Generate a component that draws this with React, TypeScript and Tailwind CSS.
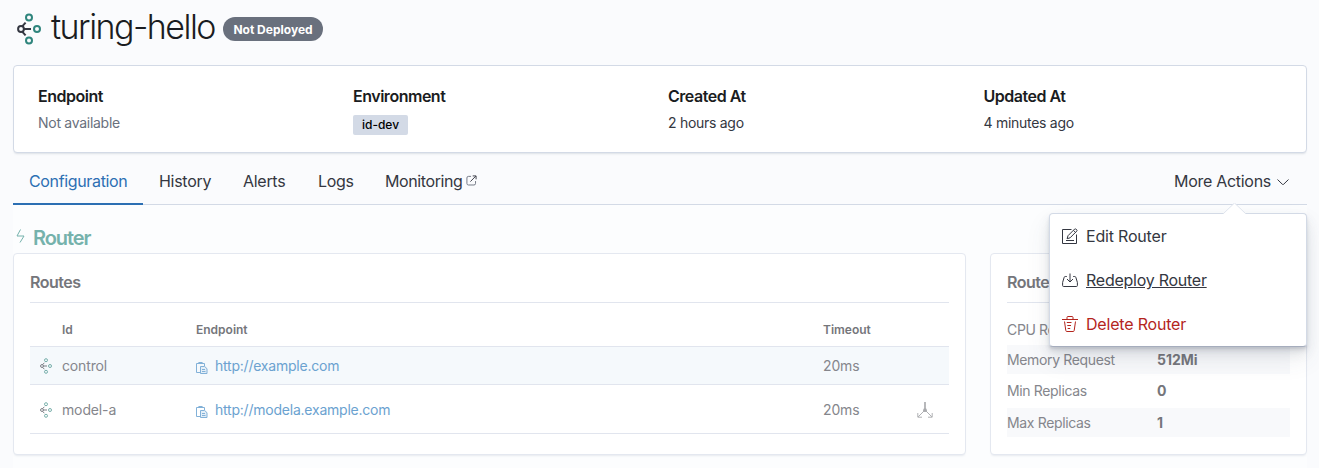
import React from "react";

function NodesIcon({ className, thin }: { className: string; thin?: boolean }) {
  return (
    <svg className={className} viewBox="0 0 24 32" fill="none" strokeWidth={thin ? 1.8 : 2}>
      <g stroke="#2f857d">
        <circle cx="12" cy="4.400" r="3" />
        <circle cx="20" cy="16" r="3" />
        <circle cx="12" cy="27.600" r="3" />
      </g>
      <g stroke="#343741">
        <circle cx="4" cy="16" r="2.900" />
        <path d="M7 16h7M5.400 13.200 8.600 9.600M5.400 18.800 8.600 22.400" />
      </g>
    </svg>
  );
}

function PopoutIcon() {
  return (
    <svg className="h-[11px] w-[11px] -translate-y-px" viewBox="0 0 12 12" fill="none" stroke="#69707d">
      <path d="M5.500 1.500H2.700A1.700 1.700 0 0 0 1 3.200v6A1.700 1.700 0 0 0 2.700 10.900h6A1.700 1.700 0 0 0 10.400 9.200V6.600" />
      <path d="M4.800 7.200 10.700 1.200M7.300 1h3.700v3.700" stroke="#343741" />
    </svg>
  );
}

function CopyIcon() {
  return (
    <svg className="h-3 w-3 translate-y-0.5" viewBox="0 0 12 12" fill="none" stroke="#82b1d8">
      <path d="M4 10.500H.5v-9h8V4M2.700 1.500V.5h3.600v1" />
      <path d="M4.500 4.500h4.200l2.300 2.200v4.800H4.500z" fill="#e3eef7" />
      <path d="M6 7.500h3M6 9.500h3.500" />
    </svg>
  );
}

function DefaultRouteIcon() {
  return (
    <svg className="ml-px h-4 w-4" viewBox="0 0 16 16" fill="none" stroke="#b0b1b4">
      <path d="M8 0v7" strokeWidth="1.800" />
      <path d="m7 9-6 6m8-6 6 6M.8 11v4.200H5M11 15.200h4.200V11" />
      <circle cx="8" cy="8.200" r="1.900" fill="#a9aaad" stroke="none" />
    </svg>
  );
}

function EditIcon() {
  return (
    <svg className="h-4 w-4" viewBox="0 0 16 16" fill="none" stroke="#343741">
      <path d="M9.500 1.500h-9v14h14V6.500M4 12.500h8" />
      <path d="m6 7.700 6.700-6.700a.8.8 0 0 1 1.100 0l1 1a.8.8 0 0 1 0 1.100L8.100 9.800l-3 .9zM11.500 2.400l2 2" />
    </svg>
  );
}

function RedeployIcon() {
  return (
    <svg className="h-4 w-4" viewBox="0 0 16 16" fill="none" stroke="#343741">
      <path d="M4.800 4.500H3.300c-.7 0-1 .4-1.200 1L.6 10.500v3q0 1 1 1h12.800q1 0 1-1v-3l-1.500-5c-.2-.6-.5-1-1.200-1h-1.500" />
      <path d="M8 1.500v8M5 7l3 3 3-3" />
    </svg>
  );
}

function TrashIcon() {
  return (
    <svg className="h-4 w-4" viewBox="0 0 16 16" fill="none" stroke="#b4251d">
      <path d="M0 3.500h16M5 3.500v-2q0-1 1-1h4q1 0 1 1v2M2.500 5.500l1.300 9q.1 1 1 1h6.400q.9 0 1-1l1.300-9" />
      <path d="M4.800 6.500h4.700M5.300 9.500h3.700M5.700 12.500h2.500" />
    </svg>
  );
}

function Fact({ title, children }: { title: string; children: React.ReactNode }) {
  return (
    <div>
      <div className="text-base leading-6 font-semibold tracking-[-0.03em] text-[#1a1c21]">{title}</div>
      <div className="mt-[3px] flex h-6 items-center text-sm tracking-[-0.02em] text-[#343741]">{children}</div>
    </div>
  );
}

function RouteRow({ id, url, tall, isDefault }: { id: string; url: string; tall?: boolean; isDefault?: boolean }) {
  return (
    <div
      className={`grid grid-cols-[32px_134px_627px_93px_1fr] items-center border-t border-[#e1e5ee] text-sm tracking-[-0.01em] text-[#85868c] ${
        tall ? "h-[50px] border-b pt-0.5" : "h-[38px] bg-[#f5f9fc]"
      }`}
    >
      <NodesIcon className="ml-2.5 h-4 w-3 opacity-70" thin />
      <span>{id}</span>
      <span className="flex items-center gap-[7px] tracking-[-0.016em] text-[#6ba2d0]">
        <CopyIcon />
        {url}
      </span>
      <span>20ms</span>
      {isDefault && <DefaultRouteIcon />}
    </div>
  );
}

function Spec({ name, value, className }: { name: string; value?: string; className: string }) {
  return (
    <div className={`flex items-center text-sm ${className}`}>
      <span className="w-[150px] tracking-[-0.025em] text-[#85868c]">{name}</span>
      <span className="font-bold text-[#75767b]">{value}</span>
    </div>
  );
}

export default function App() {
  return (
    <div className="h-[468px] w-[1319px] overflow-hidden bg-[#fafbfd] pr-3 pl-[13px] font-[Inter,sans-serif] text-[#343741]">
      <header className="flex h-[65px] items-start pl-1">
        <NodesIcon className="mt-[13px] h-8 w-6" />
        <h1 className="mt-[7px] ml-[10px] w-[165px] text-[34px] leading-10 font-light tracking-[-0.045em] whitespace-nowrap text-[#1a1c21]">
          turing-hello
        </h1>
        <span className="mt-[17px] ml-[7px] flex h-6 w-[100px] items-center justify-center rounded-full bg-[#69707d] pt-px text-xs font-bold text-white">
          Not Deployed
        </span>
      </header>

      <section className="grid h-[88px] grid-cols-[315px_315px_315.5px_1fr] rounded border border-[#d3dae6] bg-white pt-[18px] pl-6 shadow-[0_2px_2px_-1px_rgba(152,162,179,0.3)]">
        <Fact title="Endpoint">
          <span className="text-[#69707d]">Not available</span>
        </Fact>
        <Fact title="Environment">
          <span className="mt-1 flex h-5 w-[55px] items-center justify-center rounded-xs bg-[#d3dae6] text-xs font-medium tracking-normal text-black">
            id-dev
          </span>
        </Fact>
        <Fact title="Created At">2 hours ago</Fact>
        <Fact title="Updated At">4 minutes ago</Fact>
      </section>

      <nav className="flex h-[52px] border-b border-[#d3dae6] text-base leading-6 tracking-[-0.018em]">
        <div className="-mb-px flex w-[130px] items-center border-b-2 border-[#2c6fb3] pt-[6px] pl-4 tracking-[-0.022em] text-[#2c6fb3]">
          <span className="-mt-px">Configuration</span>
        </div>
        <div className="flex w-[84px] items-center pt-[5px] pl-4">History</div>
        <div className="flex w-[75px] items-center pt-[5px] pl-4">Alerts</div>
        <div className="flex w-[67px] items-center pt-[5px] pl-4">Logs</div>
        <div className="flex items-center gap-1 pt-[5px] pl-4 tracking-[-0.025em]">
          Monitoring
          <PopoutIcon />
        </div>
        <div className="relative ml-auto flex items-center gap-[6px] pt-[5px] pr-[18px]">
          More Actions
          <svg className="mt-0.5 h-3 w-3" viewBox="0 0 12 12" fill="none" stroke="#343741">
            <path d="M.5 3.500 5.400 8.300q.6.600 1.200 0L11.500 3.500" />
          </svg>
          <div className="absolute top-[60px] right-0 z-10 h-[134px] w-[258px] rounded border border-[#d3dae6] border-b-[#a6adbd] bg-white tracking-[-0.012em] shadow-[0_12px_24px_0_rgba(65,78,101,0.1),0_6px_12px_0_rgba(65,78,101,0.1),0_4px_4px_0_rgba(65,78,101,0.1),0_2px_2px_0_rgba(65,78,101,0.1)]">
            <svg className="absolute -top-[11px] left-[173px] h-3 w-[23px]" viewBox="0 0 23 12">
              <path d="M0 11 11.500 0 23 11v1H0z" fill="#fff" />
              <path d="M0 11 11.500 0 23 11" fill="none" stroke="#dfe4ed" />
            </svg>
            <ul className="flex flex-col">
              <li className="flex h-11 items-center gap-2 pl-3">
                <EditIcon />
                Edit Router
              </li>
              <li className="flex h-11 items-center gap-2 pl-3 tracking-[-0.016em]">
                <RedeployIcon />
                <span className="underline">Redeploy Router</span>
              </li>
              <li className="flex h-11 items-center gap-2 pl-3 text-[#b4251d]">
                <TrashIcon />
                Delete Router
              </li>
            </ul>
          </div>
        </div>
      </nav>

      <main className="h-[263px] bg-[#fcfdfe]">
        <h2 className="flex h-12 items-center pt-[18px] pl-[3px] text-xl font-semibold tracking-[-0.055em] text-[#75b2ac]">
          <svg className="mr-[7px] h-4 w-[10px] -translate-y-0.5" viewBox="0 0 10 16" fill="none" stroke="#75b2ac">
            <path d="M4.500 1.500 1 8h7l-4 6.500" strokeLinejoin="round" />
          </svg>
          Router
        </h2>
        <div className="flex gap-6">
          <section className="h-[202px] w-[953px] rounded border border-[#e4e8f0] bg-white px-4 shadow-[0_2px_2px_-1px_rgba(152,162,179,0.2)]">
            <h3 className="flex h-[49px] items-center border-b border-[#e1e5ee] pt-[7px] text-base font-semibold tracking-[-0.03em] text-[#75767b]">
              Routes
            </h3>
            <div className="grid h-[43px] grid-cols-[32px_134px_627px_1fr] items-center pt-[11px] text-xs font-semibold text-[#75767b]">
              <span />
              <span>Id</span>
              <span>Endpoint</span>
              <span>Timeout</span>
            </div>
            <RouteRow id="control" url="http://example.com" />
            <RouteRow id="model-a" url="http://modela.example.com" tall isDefault />
          </section>
          <section className="h-[202px] w-[317px] rounded border border-[#e4e8f0] bg-white px-4 shadow-[0_2px_2px_-1px_rgba(152,162,179,0.2)]">
            <h3 className="flex h-[49px] items-center border-b border-[#e1e5ee] pt-[7px] text-base font-semibold tracking-[-0.03em] text-[#75767b]">
              Router
            </h3>
            <Spec name="CPU Request" className="mt-3 h-[30px]" />
            <Spec name="Memory Request" value="512Mi" className="h-[29px] bg-[#f8f9fb]" />
            <Spec name="Min Replicas" value="0" className="h-[34px]" />
            <Spec name="Max Replicas" value="1" className="h-[29px] bg-[#f8f9fb]" />
          </section>
        </div>
      </main>
    </div>
  );
}
